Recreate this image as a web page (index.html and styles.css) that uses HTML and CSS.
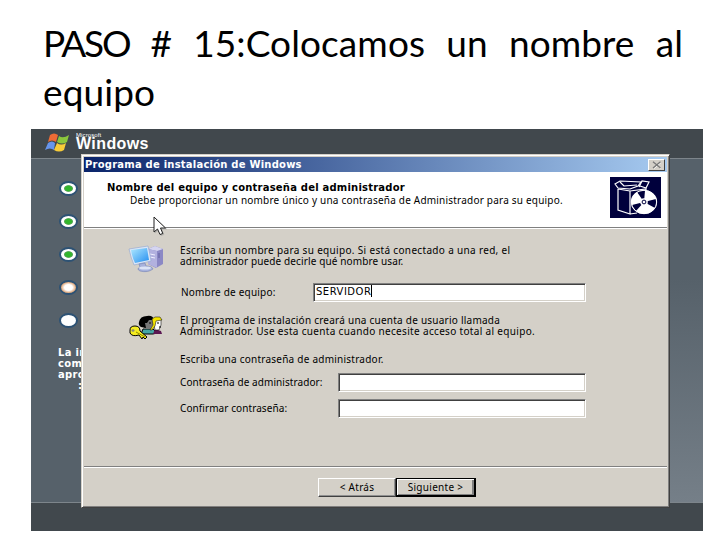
FILE: index.html
```html
<!DOCTYPE html>
<html lang="es">
<head>
<meta charset="utf-8">
<title>PASO # 15</title>
<link rel="stylesheet" href="styles.css">
</head>
<body>
<h1 class="title"><span class="line spread"><span class="caps">PASO</span> # 15:Colocamos un nombre al</span><span class="line">equipo</span></h1>
<main class="screen">
  <header class="topbar">
    <svg class="flag" width="25" height="20" viewBox="0 0 25 20">
      <path d="M5 2Q9-1 13 2L11 9Q7 6 3 9Z" fill="#ee6b35"/>
      <path d="M14 3Q18 6 24 2L22 9Q17 12 12 9Z" fill="#8bc63d"/>
      <path d="M3 10Q7 7 10 10L9 17Q5 14 0 17Z" fill="#6795ed"/>
      <path d="M12 10Q16 13 21 10L19 17Q14 20 9 17Z" fill="#f8cc38"/>
    </svg>
    <div class="brand"><span class="ms">Microsoft</span><span class="win">Windows</span></div>
  </header>
  <div class="desk">
    <ul class="steps">
      <li class="dot done"></li>
      <li class="dot done"></li>
      <li class="dot done"></li>
      <li class="dot active"></li>
      <li class="dot"></li>
    </ul>
    <div class="remaining"><span>La in</span><span>com</span><span>apro</span><span class="last">:</span></div>
  </div>
  <footer class="bottombar"></footer>

  <section class="dialog">
    <div class="caption"><span>Programa de instalación de Windows</span>
      <button class="close"><svg width="10" height="8" viewBox="0 0 10 8"><path d="M2 1.5l7 6M9 1.5l-7 6" stroke="#fff"/><path d="M1 .8l7.5 6.2M8.500 .8l-7.500 6.2" stroke="#777" stroke-width="1.300"/></svg></button>
    </div>
    <div class="head">
      <div class="headtext">
        <h2>Nombre del equipo y contraseña del administrador</h2>
        <p>Debe proporcionar un nombre único y una contraseña de Administrador para su equipo.</p>
      </div>
      <svg class="box" width="51" height="41" viewBox="0 0 51 41">
        <path d="M0 0H51V41H0Z" fill="#00003c"/>
        <g fill="none" stroke="#fff" stroke-width="1.200">
          <path d="M8 12V33L20 37V14M8 12L20 14L36 12V17M20 37L27 36"/>
          <path d="M5 7L10 4L31 5L28 9L20 12L8 11Z"/>
          <path d="M10 5L14 9L27 8M29 10L32 4L39 5L36 11L30 9"/>
        </g>
        <ellipse cx="34" cy="25" rx="13" ry="12" fill="#fff"/>
        <path d="M34 25L27 15Q31 13 35 13.500ZM34 25L46 22Q47 27 45 31ZM34 25L26 34Q23 31 22 28Z" fill="#00003c"/>
        <ellipse cx="34" cy="25" rx="12.700" ry="11.700" fill="none" stroke="#fff"/>
        <circle cx="34" cy="25" r="3.800" fill="#fff"/><circle cx="34" cy="25" r="1.900" fill="#fff" stroke="#00003c"/>
      </svg>
    </div>
    <div class="body">
      <div class="row intro">
        <svg class="ico" width="36" height="28" viewBox="0 0 36 28">
          <defs><linearGradient id="scr" x2="1" y2="1"><stop stop-color="#aee8ff"/><stop offset="1" stop-color="#248ef0"/></linearGradient></defs>
          <path d="M20 4L27 1L35 4V19L28 23L20 19Z" fill="#8b88c5"/>
          <path d="M20 4L27 1L35 4L29 6Z" fill="#d5d5f0"/><path d="M20 4L29 6V23L20 19Z" fill="#b2b1df"/>
          <path d="M22 9l5 1M22 12l5 1" stroke="#eef" /><path d="M31 8v5" stroke="#6261a0"/>
          <path d="M1 4L20 1Q22 9 23 16L6 20Q3 13 1 4Z" fill="#dce7f7" stroke="#8ea2cd" stroke-width=".6"/>
          <path d="M3 5L19 3Q20 9 21 15L7 18Q4 12 3 5Z" fill="url(#scr)"/>
          <path d="M11 19L17 18L18 21Q24 21 25 24Q20 28 12 26Q8 24 12 22Z" fill="#a7b2dc" stroke="#7481b5" stroke-width=".6"/>
          <ellipse cx="17" cy="23" rx="6" ry="1.600" fill="#dce4f6"/>
        </svg>
        <p><span class="loose">Escriba un nombre para su equipo. Si está conectado a una red, el</span><br><span class="tight">administrador puede decirle qué nombre usar.</span></p>
      </div>
      <div class="row field name"><label>Nombre de equipo:</label><div class="input wide"><span class="value">SERVIDOR</span></div></div>
      <div class="row account">
        <svg class="ico" width="36" height="26" viewBox="0 0 36 26">
          <path d="M13 19L15 14H25L29 18L25 19Z" fill="#45a6a5" stroke="#000"/>
          <path d="M25 19L27 14L33 16L34 19Z" fill="#5b1752"/>
          <path d="M16 4L25 5V10L22 14H16Z" fill="#777"/>
          <path d="M11 7Q12 1 19 1Q25 0 26 5H21L19 8H17L18 13L13 12Q10 10 11 7Z" fill="#000"/>
          <path d="M25 4H33V10L31 15H27Z" fill="#fff" stroke="#111" stroke-width=".6"/>
          <path d="M24 4L27 2H32L34 5L28 6L27 11L24 15L22 15L25 10Z" fill="#f5e500" stroke="#222" stroke-width=".6"/>
          <path d="M29 8h2M31 12h2M21 8h2" stroke="#000"/>
          <path d="M2 15Q2 11 7 11Q12 11 12 16L19 22L17 24L15 22L14 24L11 20Q4 22 2 18Z" fill="#f5ed20" stroke="#000"/>
          <ellipse cx="5" cy="15.500" rx="1.500" ry="1.200" fill="#887"/><path d="M8 17l9 5" stroke="#8b8500"/>
        </svg>
        <p><span class="medium">El programa de instalación creará una cuenta de usuario llamada</span><br><span class="loose">Administrador. Use esta cuenta cuando necesite acceso total al equipo.</span></p>
      </div>
      <p class="row prompt"><span class="medium">Escriba una contraseña de administrador.</span></p>
      <div class="row field pass"><label>Contraseña de administrador:</label><div class="input"></div></div>
      <div class="row field confirm"><label>Confirmar contraseña:</label><div class="input"></div></div>
    </div>
    <div class="actions"><button class="btn">&lt; Atrás</button><button class="btn default">Siguiente &gt;</button></div>
    <svg class="cursor" width="14" height="20" viewBox="0 0 14 20"><path d="M1 1V16L4.500 13L7 18.500L9.800 17.500L7.500 12H12.500Z" fill="#fff" stroke="#222"/></svg>
  </section>
</main>
</body>
</html>
```
FILE: styles.css
```css
* { box-sizing: border-box; }
body { margin: 0; width: 728px; height: 546px; background: #fff; overflow: hidden; }
p, h1, h2, ul { margin: 0; padding: 0; font-weight: normal; }
.title { height: 129px; padding: 18px 45px 0 43px; font: 37px/49px Lato, sans-serif; color: #000; }
.line { display: block; white-space: nowrap; letter-spacing: .1px; }
.spread { text-align: justify; text-align-last: justify; white-space: normal; }
.caps { letter-spacing: -2.2px; }
.screen { position: relative; display: flex; flex-direction: column; width: 672px; height: 402px; margin-left: 31px; font-family: "Noto Sans", sans-serif; }
.topbar { height: 30px; flex: none; display: flex; align-items: flex-start; padding: 4px 0 0 14px; gap: 6px; background: #41484d; border-bottom: 1px solid #7d858b; }
.brand { display: flex; flex-direction: column; color: #fff; font-family: "Liberation Sans", sans-serif; }
.ms { font-size: 6px; line-height: 5px; letter-spacing: .1px; }
.win { font-size: 16px; line-height: 12px; font-weight: bold; letter-spacing: .4px; }
.desk { flex: 1; padding: 22px 0 0 27px; background: linear-gradient(90deg, #56616a 50px, transparent 50px), linear-gradient(#56616a 35%, #757f88); }
.steps { list-style: none; display: flex; flex-direction: column; gap: 18px; padding-left: 1px; }
.dot { width: 19px; height: 15px; border: 2px solid #2d5274; border-radius: 50%; background: #fff; }
.done { background: radial-gradient(ellipse, #32b62d 0 3px, #57a755 4px, #fff 5px); }
.active { background: radial-gradient(ellipse, #fff 0 4px, #e1ad83 7px); }
.remaining { display: flex; flex-direction: column; margin-top: 19px; width: 30px; color: #fff; font: bold 10px/11px "DejaVu Sans", sans-serif; letter-spacing: .3px; white-space: nowrap; }
.last { padding-left: 20px; }
.bottombar { height: 29px; flex: none; background: #41484d; border-top: 1px solid #7d858b; }
.dialog { position: absolute; left: 50px; top: 25px; width: 589px; height: 354px; padding: 1px; background: #d4d0c8; border: 1px solid; border-color: #d4d0c8 #404040 #404040 #d4d0c8; box-shadow: inset 1px 1px #fff, inset -1px -1px #808080; font-size: 10px; line-height: 11px; color: #000; white-space: nowrap; }
.caption { height: 15px; margin: 1px 1px 0; padding: 0 2px 0 1px; display: flex; align-items: center; justify-content: space-between; color: #fff; font: bold 10px/14px "DejaVu Sans", sans-serif; letter-spacing: .22px; background: linear-gradient(90deg, #0a246a, #a6caf0); }
.close { width: 17px; height: 12px; padding: 0; display: flex; align-items: center; justify-content: center; background: #d4d0c8; border: 1px solid; border-color: #fff #404040 #404040 #fff; }
.close path { fill: none; }
.head { height: 56px; margin: 0 1px; display: flex; justify-content: space-between; padding: 5px 6px 0 23px; background: #fff; border-bottom: 1px solid #808080; }
.headtext { padding-top: 5px; }
.head h2 { font: bold 10px/12px "DejaVu Sans", sans-serif; letter-spacing: .21px; }
.head p { padding-left: 23px; line-height: 12px; letter-spacing: .21px; }
.body { height: 239px; margin: 0 1px; padding: 16px 0 0 96px; border-top: 1px solid #fff; border-bottom: 1px solid #808080; box-shadow: 0 1px #fff; }
.row { display: flex; }
.intro { height: 22px; }
.loose { letter-spacing: .33px; }
.medium { letter-spacing: .24px; }
.tight { letter-spacing: .12px; }
.ico { flex: none; margin: 0 16px 0 -52px; }
.field { height: 19px; align-items: center; justify-content: space-between; padding-right: 81px; letter-spacing: .08px; }
.name { margin-top: 16px; padding-left: 1px; letter-spacing: .2px; }
.account { height: 22px; margin-top: 13px; }
.prompt { margin-top: 17px; }
.pass { margin-top: 8px; }
.confirm { margin-top: 7px; }
.input { width: 248px; height: 19px; background: #fff; border: 1px solid; border-color: #808080 #fff #fff #808080; box-shadow: inset 1px 1px #404040, inset -1px -1px #d4d0c8; }
.wide { width: 273px; padding: 1px 0 0 2px; }
.value { display: inline-block; height: 12px; font-family: "DejaVu Sans", sans-serif; line-height: 13px; letter-spacing: .5px; border-right: 1px solid #000; }
.actions { display: flex; justify-content: center; margin-top: 11px; padding-left: 43px; }
.btn { width: 78px; height: 19px; padding: 0; font: 10px/15px "Noto Sans", sans-serif; letter-spacing: .3px; color: #000; background: #d4d0c8; border: 1px solid; border-color: #fff #404040 #404040 #fff; box-shadow: inset -1px -1px #909090; }
.default { width: 80px; border-color: #000; border-width: 1px 2px 2px 1px; box-shadow: inset 1px 1px #fff, inset -2px -1px #808080; }
.cursor { position: absolute; left: 71px; top: 61px; filter: drop-shadow(1px 1px #9998); }
```
